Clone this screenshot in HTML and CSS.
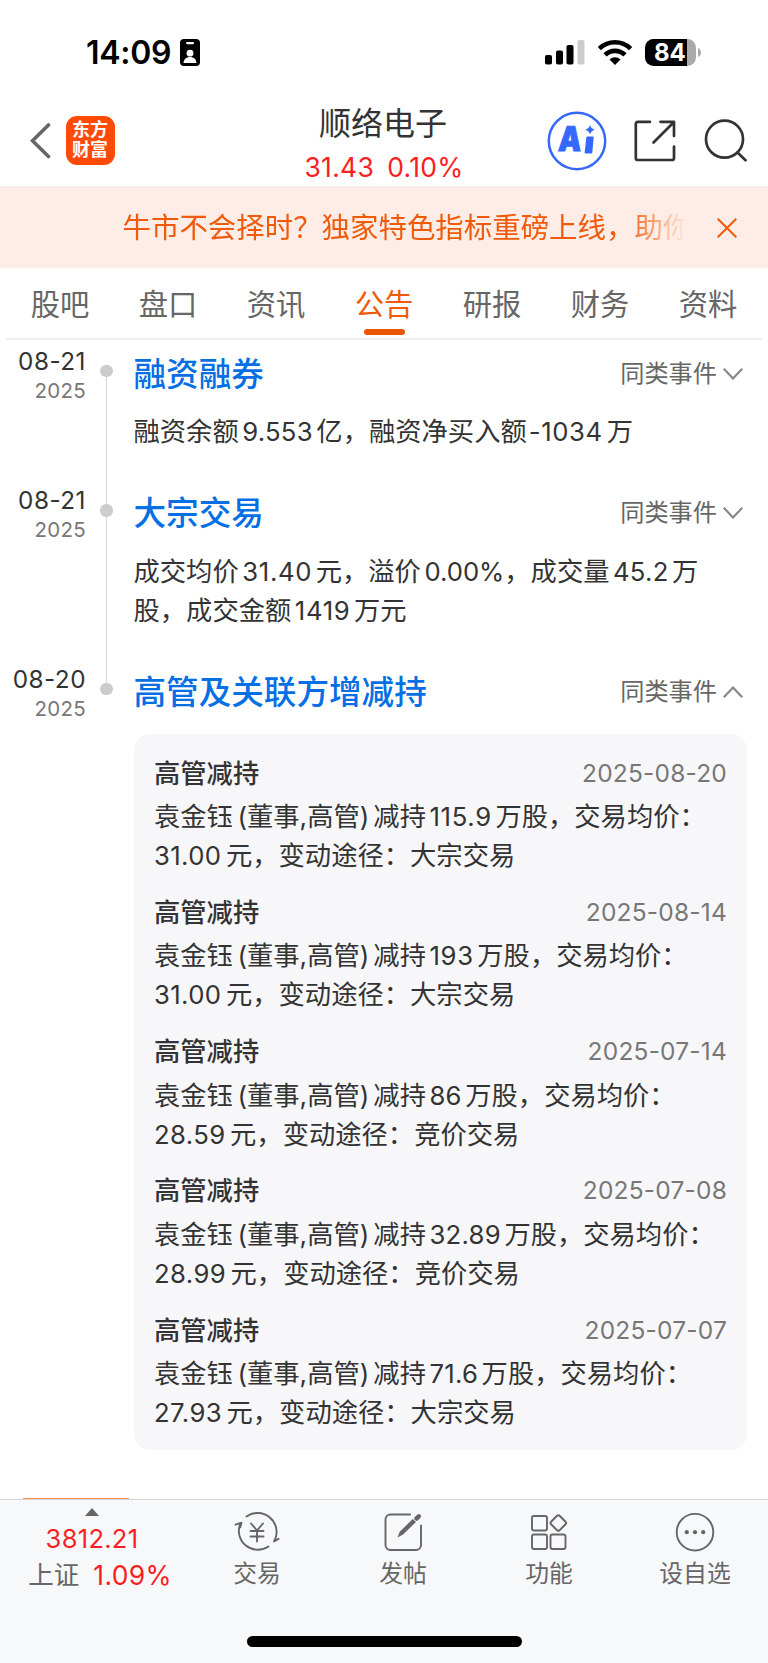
FILE: index.html
```html
<!DOCTYPE html>
<html lang="zh-CN">
<head>
<meta charset="utf-8">
<title>顺络电子 - 公告</title>
<link rel="stylesheet" href="styles.css">
</head>
<body>
<div class="page">
  <div class="status">
    <div class="status-left">
      <span class="clock">14:09</span>
      <svg class="badge-id" viewBox="0 0 20 27"><rect width="20" height="27" rx="4"/><rect x="6" y="3" width="8" height="2.2" rx="1.1" fill="#fff"/><circle cx="10" cy="14.2" r="3.4" fill="#fff"/><path d="M3.5 24c.3-4 3-6 6.500-6s6.200 2 6.500 6z" fill="#fff"/></svg>
    </div>
    <div class="status-right">
      <svg class="signal" viewBox="0 0 40 25"><rect x="0" y="15" width="7" height="9.500" rx="1.800"/><rect x="11" y="10.500" width="7" height="14" rx="1.800"/><rect x="21.500" y="5" width="7" height="19.500" rx="1.800"/><rect x="32.500" y="0" width="7" height="24.500" rx="1.800" fill="#ccc"/></svg>
      <svg class="wifi" viewBox="0 0 34 25"><g fill="none" stroke="#000" stroke-width="4.600"><path d="M1.300 8.700a22.500 22.500 0 0 1 31.400 0"/><path d="M7 14.900a14.400 14.400 0 0 1 20 0"/></g><path d="M11.500 19.400a8 8 0 0 1 11 0L17 25z"/></svg>
      <div class="battery"><span>84</span></div>
      <svg class="cap" viewBox="0 0 3 9"><path d="M0 0q3 1.500 3 4.500T0 9z" fill="#aaa"/></svg>
    </div>
  </div>

  <div class="header">
    <div class="header-left">
      <svg class="back" viewBox="0 0 22 36"><path d="M18.500 2 2.500 17.800 18.500 33.500" fill="none" stroke="#666" stroke-width="3.600" stroke-linecap="round"/></svg>
      <div class="logo"><span>东方</span><span>财富</span></div>
    </div>
    <div class="stock">
      <div class="stock-name">顺络电子</div>
      <div class="stock-price"><span>31.43</span><span>0.10%</span></div>
    </div>
    <div class="header-right">
      <svg class="ai" viewBox="0 0 60 60"><circle cx="30" cy="30" r="28.200" fill="none" stroke="#3568ff" stroke-width="2.500"/><text class="ai-letter" x="13.500" y="40.500" transform="skewX(-4)" textLength="23" lengthAdjust="spacingAndGlyphs">A</text><path d="M40.300 26.500h5.400l-1.400 15h-5.700z" fill="#3568ff" stroke="#3568ff" stroke-width="2" stroke-linejoin="round"/><path d="M43 14q1 3.800 4.800 4.800-3.800 1-4.800 4.800-1-3.800-4.800-4.800 3.800-1 4.800-4.800z" fill="#3568ff"/></svg>
      <svg class="share" viewBox="0 0 42 42"><g fill="none" stroke="#333" stroke-width="2.700" stroke-linecap="round" stroke-linejoin="round"><path d="M16 1.800H3.800a2 2 0 0 0-2 2V38a2 2 0 0 0 2 2H38a2 2 0 0 0 2-2V26.500"/><path d="M26.500 1.800H40V16M39.500 2.500 19.500 22.500"/></g></svg>
      <svg class="search" viewBox="0 0 43 43"><g fill="none" stroke="#333" stroke-width="2.700" stroke-linecap="round"><circle cx="20.500" cy="20.200" r="18.500"/><path d="m33.500 33.500 8 7.700"/></g></svg>
    </div>
  </div>

  <div class="banner">
    <div class="banner-text">牛市不会择时？独家特色指标重磅上线，助你</div>
    <svg class="close" viewBox="0 0 20 20"><path d="m.700.700 18.600 18.600M19.300.700.700 19.300" stroke="#f05a0a" stroke-width="2"/></svg>
  </div>

  <div class="tabs">
    <div class="tab">股吧</div><div class="tab">盘口</div><div class="tab">资讯</div><div class="tab active">公告</div><div class="tab">研报</div><div class="tab">财务</div><div class="tab">资料</div>
  </div>

  <div class="timeline">
    <div class="item">
      <div class="date"><div class="day">08-21</div><div class="year">2025</div></div>
      <div class="axis"><i class="lead off"></i><i class="dot"></i><i class="tail"></i></div>
      <div class="content">
        <div class="top"><div class="title">融资融券</div><div class="more">同类事件<svg viewBox="0 0 20 12"><path d="m.800.800 9.200 9.700L19.200.800"/></svg></div></div>
        <div class="body"><div>融资余额<b>9.553</b>亿，融资净买入额<b class="minus">-1034</b>万</div></div>
      </div>
    </div>
    <div class="item">
      <div class="date"><div class="day">08-21</div><div class="year">2025</div></div>
      <div class="axis"><i class="lead"></i><i class="dot"></i><i class="tail"></i></div>
      <div class="content">
        <div class="top"><div class="title">大宗交易</div><div class="more">同类事件<svg viewBox="0 0 20 12"><path d="m.800.800 9.200 9.700L19.200.800"/></svg></div></div>
        <div class="body"><div>成交均价<b class="loose">31.40</b>元，溢价<b class="pct">0.00%</b>，成交量<b>45.2</b>万</div><div>股，成交金额<b class="loose">1419</b>万元</div></div>
      </div>
    </div>
    <div class="item last">
      <div class="date"><div class="day">08-20</div><div class="year">2025</div></div>
      <div class="axis"><i class="lead"></i><i class="dot"></i><i class="tail off"></i></div>
      <div class="content">
        <div class="top"><div class="title">高管及关联方增减持</div><div class="more">同类事件<svg viewBox="0 0 20 12"><path d="M.800 11.200 10 1.500l9.200 9.700"/></svg></div></div>
        <div class="panel">
          <div class="entry"><div class="entry-head"><strong>高管减持</strong><span>2025-08-20</span></div><div>袁金钰<em>(董事,高管)</em>减持<b class="loose">115.9</b>万股，交易均价：</div><div><b class="first">31.00</b>元，变动途径：大宗交易</div></div>
          <div class="entry"><div class="entry-head"><strong>高管减持</strong><span>2025-08-14</span></div><div>袁金钰<em>(董事,高管)</em>减持<b class="loose">193</b>万股，交易均价：</div><div><b class="first">31.00</b>元，变动途径：大宗交易</div></div>
          <div class="entry"><div class="entry-head"><strong>高管减持</strong><span>2025-07-14</span></div><div>袁金钰<em>(董事,高管)</em>减持<b>86</b>万股，交易均价：</div><div><b class="first">28.59</b>元，变动途径：竞价交易</div></div>
          <div class="entry"><div class="entry-head"><strong>高管减持</strong><span>2025-07-08</span></div><div>袁金钰<em>(董事,高管)</em>减持<b>32.89</b>万股，交易均价：</div><div><b class="first">28.99</b>元，变动途径：竞价交易</div></div>
          <div class="entry"><div class="entry-head"><strong>高管减持</strong><span>2025-07-07</span></div><div>袁金钰<em>(董事,高管)</em>减持<b>71.6</b>万股，交易均价：</div><div><b class="first">27.93</b>元，变动途径：大宗交易</div></div>
        </div>
      </div>
    </div>
    <div class="next-card"></div>
  </div>

  <div class="footer">
    <div class="nav">
      <div class="index">
        <svg class="caret" viewBox="0 0 14 8"><path d="M7 0l7 8H0z" fill="#666"/></svg>
        <div class="index-value">3812.21</div>
        <div class="index-row"><span class="index-name">上证</span><span class="index-pct">1.09%</span></div>
      </div>
      <div class="nav-item">
        <svg viewBox="0 0 46 40"><g fill="none" stroke="#666" stroke-width="1.900" stroke-linecap="round" stroke-linejoin="round"><path d="M12.500 4.500A19 19 0 0 1 41 27.500M41 27.500l-1 1.800 4.500-2.500M34.500 34.500A19 19 0 0 1 6.300 11.500M1.500 12.700l6-2-1.200 4.500"/><path d="m17 11.500 6 7 6-7M23 18.500v11M16.500 19h13M16.500 24.500h13"/></g></svg>
        <div>交易</div>
      </div>
      <div class="nav-item">
        <svg viewBox="0 0 46 40"><g fill="none" stroke="#666" stroke-width="1.900" stroke-linecap="round"><path d="M30 2.500H10.500a5 5 0 0 0-5 5V33a5 5 0 0 0 5 5H36a5 5 0 0 0 5-5V13.500"/></g><path d="M17.500 25.500 19.700 19.800 32.700 7 36 10 23 22.600z" fill="#666"/><path d="m36.500 6.500 2.300-2.200" stroke="#666" stroke-width="4.500" stroke-linecap="round"/></svg>
        <div>发帖</div>
      </div>
      <div class="nav-item">
        <svg viewBox="0 0 46 40"><g fill="none" stroke="#666" stroke-width="1.900"><rect x="6" y="4" width="15" height="14.500" rx="2"/><rect x="6" y="22.500" width="15" height="14.500" rx="2"/><rect x="24.500" y="22.500" width="15" height="14.500" rx="2"/><rect x="26.300" y="5" width="12" height="12" rx="1.800" transform="rotate(45 32.300 11)"/></g></svg>
        <div>功能</div>
      </div>
      <div class="nav-item">
        <svg viewBox="0 0 46 40"><circle cx="23" cy="20.200" r="18.300" fill="none" stroke="#666" stroke-width="1.900"/><g fill="#666"><circle cx="14.800" cy="20.200" r="2.100"/><circle cx="23" cy="20.200" r="2.100"/><circle cx="31.200" cy="20.200" r="2.100"/></g></svg>
        <div>设自选</div>
      </div>
    </div>
    <div class="home-bar"></div>
  </div>
</div>
</body>
</html>
```
FILE: styles.css
```css
* { box-sizing: border-box; }
body {
  margin: 0;
  background: #fff;
  color: #333;
  font-family: Inter, "Noto Sans CJK SC", sans-serif;
}
svg { display: block; flex: none; }
.page { width: 768px; height: 1663px; display: flex; flex-direction: column; overflow: hidden; }

/* status bar */
.status { height: 96px; display: flex; justify-content: space-between; padding: 38px 67px 0 86px; }
.status-left, .status-right { display: flex; align-items: center; height: 28px; }
.clock { font-size: 32px; font-weight: 600; line-height: 28px; color: #000; width: 93.500px; white-space: nowrap; letter-spacing: -0.300px; padding-top: 1px; }
.badge-id { width: 20px; height: 27px; margin-top: 1px; }
.signal { width: 40px; height: 25px; margin-right: 13px; }
.wifi { width: 34px; height: 25px; margin-right: 13px; }
.battery {
  width: 51px; height: 27px; border-radius: 8.500px; margin-right: 2px;
  background: linear-gradient(to right, #000 42.500px, #aaa 42.500px);
  color: #fff; font-size: 24px; font-weight: 700; line-height: 27px; padding-left: 9px;
}
.cap { width: 3px; height: 9px; }

/* header */
.header { height: 91px; display: grid; grid-template-columns: 1fr 200px 1fr; border-bottom: 1.500px solid #ececee; }
.header-left { display: flex; align-items: flex-start; padding: 19.500px 0 0 29.500px; }
.back { width: 22px; height: 36px; margin: 7.500px 14px 0 0; }
.logo {
  width: 49px; height: 49px; border-radius: 11px; background: #ff4b06; color: #fff;
  display: flex; flex-direction: column; align-items: center; justify-content: center;
  font-size: 18px; font-weight: 700; line-height: 20.500px;
}
.stock { text-align: center; padding-top: 9px; }
.stock-name { font-size: 32px; line-height: 38px; white-space: nowrap; margin-left: -2px; }
.stock-price { display: flex; justify-content: center; gap: 13px; font-size: 26.500px; letter-spacing: 0.300px; line-height: 32px; color: #fa1e23; margin-top: 8px; white-space: nowrap; }
.header-right { display: flex; align-items: flex-start; padding-top: 14.500px; padding-left: 63px; }
.ai { width: 60px; height: 60px; margin-right: 27px; }
.ai-letter { font-family: Inter, sans-serif; font-weight: 900; font-size: 34px; fill: #3568ff; stroke: #3568ff; stroke-width: 1; }
.share { width: 42px; height: 42px; margin: 9.500px 28px 0 0; }
.search { width: 43px; height: 43px; margin-top: 8px; }

/* promotion */
.banner { height: 81px; background: #feede6; display: flex; align-items: center; padding-left: 122.500px; color: #f05a0a; }
.banner-text {
  width: 570px; margin-right: 24.500px; white-space: nowrap; font-size: 28.450px; line-height: 40px;
  -webkit-mask-image: linear-gradient(to right, #000 500px, transparent 564px);
  mask-image: linear-gradient(to right, #000 500px, transparent 564px);
}
.close { width: 20px; height: 20px; }

/* tabs */
.tabs { height: 72px; margin: 0 6px; display: flex; border-bottom: 2px solid #efeff1; }
.tab { flex: 1; display: flex; flex-direction: column; align-items: center; font-size: 29.300px; line-height: 44px; padding-top: 15px; color: #666; }
.tab.active { color: #f05a0a; }
.tab.active::after { content: ""; width: 41px; height: 6px; border-radius: 3px; background: #ea5504; margin-top: 2px; }

/* timeline */
.timeline { height: 1159px; display: flex; flex-direction: column; }
.item { display: grid; grid-template-columns: 86px 41px 1fr; }
.date { text-align: right; padding-top: 5.500px; }
.day { font-size: 24.300px; line-height: 30px; letter-spacing: 0.500px; }
.year { font-size: 20.500px; line-height: 30px; color: #777; letter-spacing: 0.300px; }
.axis { display: flex; flex-direction: column; align-items: center; }
.lead { width: 1.500px; height: 24.500px; background: #d8d8d8; }
.dot { width: 12.500px; height: 12.500px; border-radius: 50%; background: #ccc; }
.tail { width: 1.500px; flex: 1; background: #d8d8d8; }
.off { background: none; }
.content { padding: 13.500px 21px 28px 6.500px; }
.last .content { padding-bottom: 0; }
.top { display: flex; justify-content: space-between; align-items: center; height: 40px; }
.title { font-size: 32.600px; line-height: 40px; font-weight: 500; color: #066fe4; white-space: nowrap; }
.more { display: flex; align-items: center; font-size: 24.200px; line-height: 40px; color: #666; padding-right: 4px; }
.more svg { width: 20px; height: 12px; margin-left: 6px; fill: none; stroke: #888; stroke-width: 2.200; }
.body { margin-top: 18.500px; padding-bottom: 0.500px; font-size: 26.300px; line-height: 39px; white-space: nowrap; }

/* latin runs inside chinese text */
b { font-weight: 400; font-size: 25.700px; margin: 0 3.500px; letter-spacing: 0.250px; }
b.loose { letter-spacing: 0.700px; }
b.first { margin-left: 0; margin-right: 4.500px; letter-spacing: 0.400px; }
b.minus { margin-left: 2px; margin-right: 4px; letter-spacing: 0.600px; }
b.pct { margin-right: 0; letter-spacing: 0; }
em { font-style: normal; margin: 0 4px 0 4.500px; }

.panel { margin-top: 22.500px; height: 716px; background: #f7f7fa; border-radius: 16px; padding: 19.500px 20px 0 20.500px; display: flex; flex-direction: column; gap: 17.300px; font-size: 26.300px; line-height: 39px; white-space: nowrap; }
.entry-head { display: flex; justify-content: space-between; height: 39px; margin-bottom: 4.500px; }
.entry { height: 122px; }
.entry-head strong { font-weight: 500; }
.entry-head span { font-size: 24.500px; color: #777; letter-spacing: 0.200px; }
.next-card { width: 106px; height: 1.500px; margin: auto 0 0 23px; background: #ff8b50; }

/* bottom navigation */
.footer { flex: 1; border-top: 1px solid #d3d5db; background: #f7f8fa; display: flex; flex-direction: column; align-items: center; }
.nav { display: grid; grid-template-columns: 184px repeat(4, 146px); height: 136px; }
.index { display: flex; flex-direction: column; align-items: center; padding-top: 8px; }
.caret { width: 14px; height: 8px; }
.index-value { font-size: 25.500px; line-height: 30px; letter-spacing: 0.300px; color: #fa1e23; margin-top: 7.500px; }
.index-row { display: flex; align-items: center; gap: 14px; line-height: 36px; margin: 3px 0 0 16px; }
.index-name { font-size: 25.500px; color: #666; }
.index-pct { font-size: 26.500px; letter-spacing: 0.300px; color: #fa1e23; }
.nav-item { display: flex; flex-direction: column; align-items: center; padding-top: 11.500px; font-size: 23.800px; line-height: 36px; color: #666; }
.nav-item svg { width: 46px; height: 40px; margin-bottom: 4.500px; }
.home-bar { width: 275px; height: 11px; border-radius: 6px; background: #000; }
```
